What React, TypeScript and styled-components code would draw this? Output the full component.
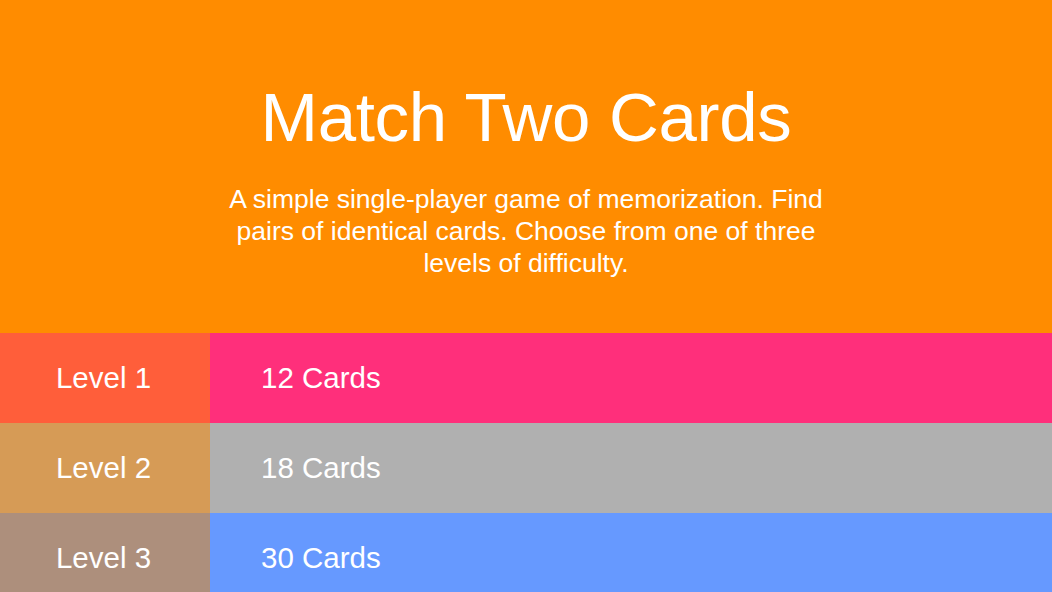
import React from "react";
import styled, { createGlobalStyle } from "styled-components";

const GlobalStyle = createGlobalStyle`
  html, body {
    margin: 0;
    padding: 0;
    height: 100%;
    overflow: hidden;
  }
  body {
    font-family: "Liberation Sans", Arial, Helvetica, sans-serif;
    background: #ff8c00;
    color: #fff;
  }
`;

const Screen = styled.div`
  width: 1052px;
  height: 592px;
  display: flex;
  flex-direction: column;
  overflow: hidden;
`;

const Hero = styled.header`
  height: 333px;
  flex-shrink: 0;
  background: #ff8c00;
  display: flex;
  flex-direction: column;
  align-items: center;
  padding-top: 78px;
  box-sizing: border-box;
`;

const Title = styled.h1`
  margin: 0;
  font-size: 69px;
  font-weight: 400;
  line-height: 80px;
  letter-spacing: -0.3px;
`;

const Blurb = styled.p`
  margin: 25px 0 0;
  width: 624px;
  text-align: center;
  font-size: 26.5px;
  line-height: 32px;
`;

const LevelList = styled.div`
  display: flex;
  flex-direction: column;
`;

const Row = styled.div`
  display: grid;
  grid-template-columns: 210px 1fr;
  height: 90px;
  flex-shrink: 0;
  cursor: pointer;
`;

const LevelCell = styled.div<{ bg: string }>`
  background: ${({ bg }) => bg};
  display: flex;
  align-items: center;
  justify-content: center;
  font-size: 29.5px;
  padding-right: 3px;
`;

const CountCell = styled.div<{ bg: string }>`
  background: ${({ bg }) => bg};
  display: flex;
  align-items: center;
  padding-left: 51px;
  font-size: 29.5px;
`;

const levels = [
  { name: "Level 1", cards: 12, side: "#ff5e3a", main: "#ff2f7b" },
  { name: "Level 2", cards: 18, side: "#d69b56", main: "#b0b0b0" },
  { name: "Level 3", cards: 30, side: "#ad8f7c", main: "#6699ff" },
];

export default function App() {
  return (
    <Screen>
      <GlobalStyle />
      <Hero>
        <Title>Match Two Cards</Title>
        <Blurb>
          A simple single-player game of memorization. Find pairs of identical
          cards. Choose from one of three levels of difficulty.
        </Blurb>
      </Hero>
      <LevelList>
        {levels.map((l) => (
          <Row key={l.name}>
            <LevelCell bg={l.side}>{l.name}</LevelCell>
            <CountCell bg={l.main}>{l.cards} Cards</CountCell>
          </Row>
        ))}
      </LevelList>
    </Screen>
  );
}
